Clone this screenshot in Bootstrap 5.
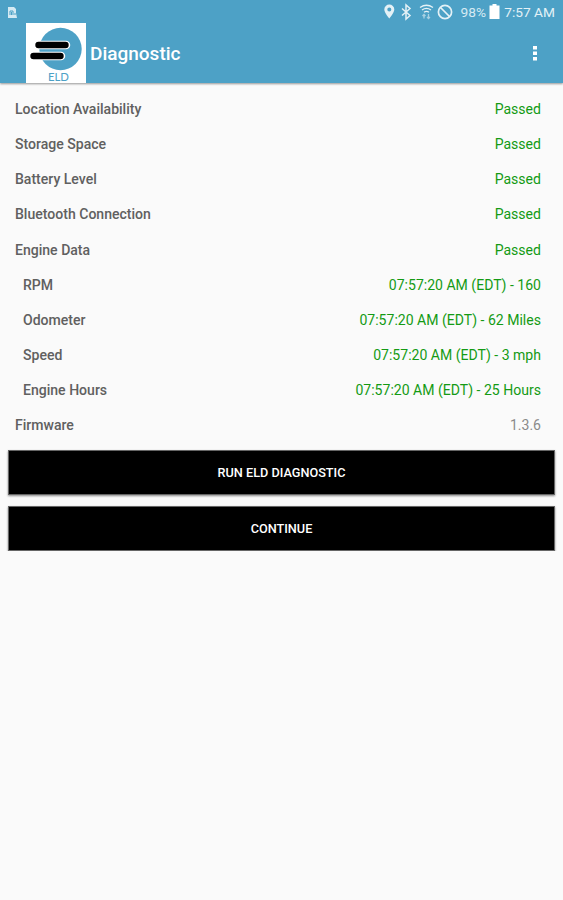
<!DOCTYPE html>
<html lang="en">
<head>
<meta charset="utf-8">
<meta name="viewport" content="width=device-width, initial-scale=1">
<title>Diagnostic</title>
<link href="https://cdn.jsdelivr.net/npm/bootstrap@5.3.0/dist/css/bootstrap.min.css" rel="stylesheet">
<style>
body{font-family:Roboto,sans-serif;background:#fafafa;color:#606060;font-size:14.05px}
.app-head{background:#4da1c6;height:83px;box-shadow:0 1px 2px rgba(0,0,0,.4)}
.status-bar{height:23px;padding:2px 8px 0 7px;font-size:13.7px;color:#e4f1f6}
.title-bar{height:60px;padding-left:26px;padding-right:22px}
.app-title{font-size:19px;font-weight:500;color:#fff;margin-left:4px;padding-top:2px}
.checks{padding:9px 22px 0 15px}
.check-row{height:35.15px}
.check-name{font-weight:500}
.sub-check{padding-left:8px}
.passed{color:#149a14}
.version{color:#8a8a8a}
.actions{padding:6.5px 8px 0;gap:11px}
.action-btn{height:45px;background:#000;color:#fff;font-size:12.7px;font-weight:500;border:1px solid #666;border-radius:0;box-shadow:0 1px 2px rgba(0,0,0,.45);padding:7px 0 7px}
.action-btn:hover{background:#222;color:#fff}
svg{display:block}
</style>
</head>
<body>
<header class="app-head">
  <div class="status-bar d-flex align-items-center justify-content-between">
    <svg width="11" height="12" viewBox="0 0 11 12"><path d="M1 0h6l2 2v4l1 5H1z" fill="#d5eaf3"/><path d="M3 8V4h3v4M4.500 5v3M8 6v2" stroke="#4da1c6" fill="none"/></svg>
    <div class="d-flex align-items-center">
      <svg width="120" height="20" viewBox="384 2 120 20" aria-hidden="true">
      <g fill="none" stroke="#e4f1f6" stroke-width="1.300">
        <path d="M389.300 4.500a5 5 0 0 0-5 5c0 3.400 5 9 5 9s5-5.600 5-9a5 5 0 0 0-5-5zm0 3a2 2 0 1 1 0 4 2 2 0 0 1 0-4z" fill="#e4f1f6" fill-rule="evenodd" stroke="none"/>
        <path d="M402 8.500l8 7-4 3.500V5l4 3.500-8 7" stroke-width="1.500"/>
        <path d="M420 7.500q6.500-4.500 13 0M422 10q4.500-3.200 9 0M424 12.300q2.500-1.800 5 0"/>
        <path d="M424 18.500v-4M422.500 16l1.500-1.500 1.500 1.500M428.500 14v4.500M427 17l1.500 1.500L430 17" opacity=".6"/>
        <circle cx="445" cy="12" r="6.600" stroke-width="1.700"/><path d="M440.500 7.500l9 9" stroke-width="1.700"/>
      </g>
      <path d="M489.500 5.500h3V4h4v1.500h3V19h-10z" fill="#fff"/>
      <text x="460.500" y="17" font-size="13.200" fill="#d5eaf3" textLength="25.500" lengthAdjust="spacingAndGlyphs">98%</text>
      </svg>
      <span>7:57 AM</span>
    </div>
  </div>
  <div class="title-bar d-flex align-items-center">
    <svg width="60" height="60" viewBox="0 0 60 60" role="img" aria-label="ELD logo">
      <path d="M0 0h60v60H0z" fill="#fff"/>
      <circle cx="34.500" cy="26" r="21.200" fill="#4da1c6"/>
      <path d="M12 22h28M7 33h28" stroke="#fff" stroke-width="8.500" stroke-linecap="round"/>
      <path d="M12.500 22h27M7.500 33h27" stroke="#000" stroke-width="6.400" stroke-linecap="round"/>
      <text x="22" y="58" font-family="Lato,sans-serif" font-size="12.300" fill="#4da1c6" textLength="21" lengthAdjust="spacingAndGlyphs">ELD</text>
    </svg>
    <h1 class="app-title mb-0">Diagnostic</h1>
    <svg class="ms-auto" width="12" height="18" viewBox="0 0 12 18" fill="#fff"><path d="M4 2h4v3.500H4zM4 7.500h4V11H4zM4 13h4v3.500H4z"/></svg>
  </div>
</header>
<main>
  <div class="checks">
    <div class="check-row d-flex align-items-center justify-content-between"><span class="check-name">Location Availability</span><span class="passed">Passed</span></div>
    <div class="check-row d-flex align-items-center justify-content-between"><span class="check-name">Storage Space</span><span class="passed">Passed</span></div>
    <div class="check-row d-flex align-items-center justify-content-between"><span class="check-name">Battery Level</span><span class="passed">Passed</span></div>
    <div class="check-row d-flex align-items-center justify-content-between"><span class="check-name">Bluetooth Connection</span><span class="passed">Passed</span></div>
    <div class="check-row d-flex align-items-center justify-content-between"><span class="check-name">Engine Data</span><span class="passed">Passed</span></div>
    <div class="check-row sub-check d-flex align-items-center justify-content-between"><span class="check-name">RPM</span><span class="passed">07:57:20 AM (EDT) - 160</span></div>
    <div class="check-row sub-check d-flex align-items-center justify-content-between"><span class="check-name">Odometer</span><span class="passed">07:57:20 AM (EDT) - 62 Miles</span></div>
    <div class="check-row sub-check d-flex align-items-center justify-content-between"><span class="check-name">Speed</span><span class="passed">07:57:20 AM (EDT) - 3 mph</span></div>
    <div class="check-row sub-check d-flex align-items-center justify-content-between"><span class="check-name">Engine Hours</span><span class="passed">07:57:20 AM (EDT) - 25 Hours</span></div>
    <div class="check-row d-flex align-items-center justify-content-between"><span class="check-name">Firmware</span><span class="version">1.3.6</span></div>
  </div>
  <div class="actions d-flex flex-column">
    <button type="button" class="btn action-btn w-100">RUN ELD DIAGNOSTIC</button>
    <button type="button" class="btn action-btn w-100">CONTINUE</button>
  </div>
</main>
<script src="https://cdn.jsdelivr.net/npm/bootstrap@5.3.0/dist/js/bootstrap.bundle.min.js"></script>
</body>
</html>
